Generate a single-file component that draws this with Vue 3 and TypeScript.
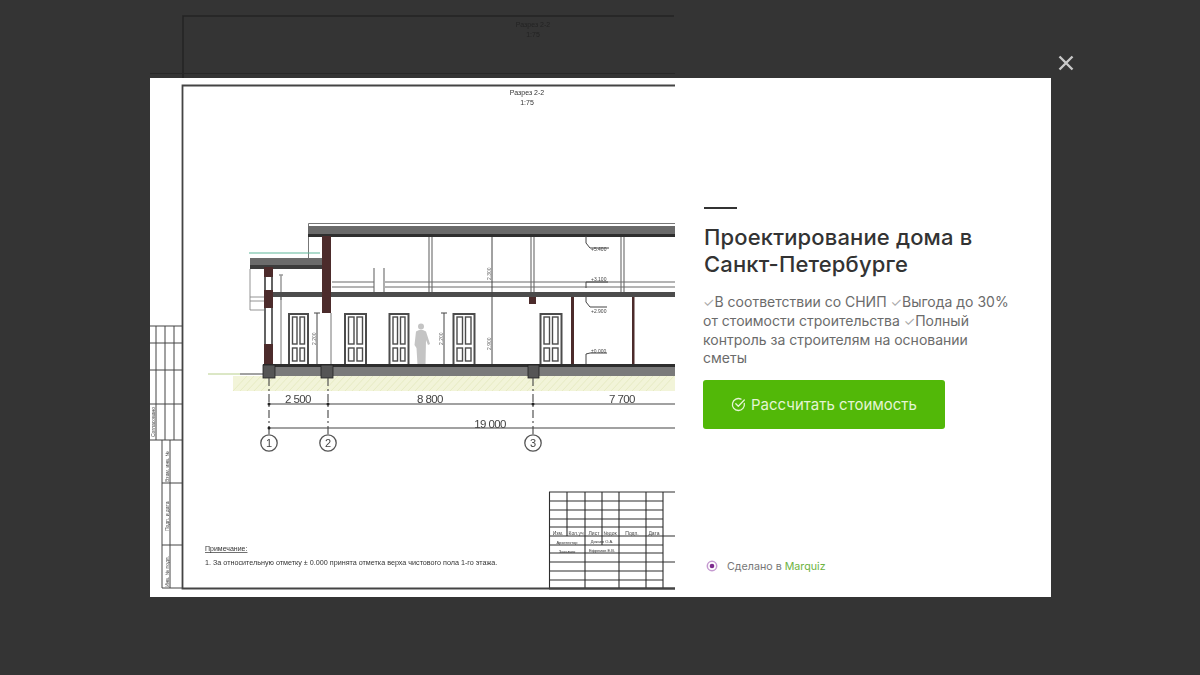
<template>
  <div class="page">
    <!-- тот же чертёж за модалкой, виден только сверху -->
    <svg class="backdrop" width="1200" height="78" viewBox="0 0 1200 78">
      <path d="M183 78V16H674" fill="none" stroke="#232323" stroke-width="1.5" />
      <path d="M150 73.5H675" stroke="#282828" stroke-width="1" />
      <text x="533" y="27" text-anchor="middle" class="bd-text">Разрез 2-2</text>
      <text x="533" y="37" text-anchor="middle" class="bd-text">1:75</text>
    </svg>

    <button class="close" aria-label="Закрыть">
      <svg width="16" height="16" viewBox="0 0 16 16">
        <path d="M1.5 1.5L14.5 14.5M14.5 1.5L1.5 14.5" stroke="#c8c8c8" stroke-width="2.4" />
      </svg>
    </button>

    <div class="modal">
      <div class="picture">
        <svg width="525" height="519" viewBox="150 78 525 519" class="drawing">
          <!-- рамка листа -->
          <path d="M675 85.5H182.5V588.5H675" fill="none" stroke="#444" stroke-width="1.8" />
          <text x="527" y="95" text-anchor="middle" class="t7">Разрез 2-2</text>
          <text x="527" y="105" text-anchor="middle" class="t7">1:75</text>

          <!-- штамп слева -->
          <g fill="none" stroke="#444" stroke-width="1">
            <path d="M150 326H182M150 343H182M150 370H182M150 404H182M150 440H182" />
            <path d="M156 326V440M165 326V440M174 326V440" />
            <path d="M162 440V588M170 440V588M162 483H182M162 545H182M162 588H182" />
          </g>
          <text transform="translate(155 437) rotate(-90)" class="t5">Согласовано</text>
          <text transform="translate(169 482) rotate(-90)" class="t5">Взам. инв. №</text>
          <text transform="translate(169 531) rotate(-90)" class="t5">Подп. и дата</text>
          <text transform="translate(169 587) rotate(-90)" class="t5">Инв. № подл.</text>

          <!-- грунт -->
          <rect x="233" y="376" width="442" height="15" fill="#f2f4d9" />
          <path v-for="x in hatchX" :key="x" :d="`M${x} 391L${x + 14} 376`" stroke="#dfe4b4" stroke-width="0.6" />
          <path d="M208 374H240" stroke="#b8cf8c" stroke-width="1" />
          <path d="M240 374H263" stroke="#444" stroke-width="1" />

          <!-- кровля -->
          <path d="M308.500 258V223.500H675" fill="none" stroke="#777" stroke-width="1" />
          <rect x="308" y="226" width="367" height="11" fill="#6a6a6a" />
          <rect x="308" y="234" width="367" height="3" fill="#2e2e2e" />

          <!-- колонны второго света -->
          <g stroke="#6a6a6a" stroke-width="1.100">
            <path d="M429 237V292M432 237V292M531 237V292M534 237V292M621 237V292M624 237V292" />
            <path d="M332 282H374M332 287H374M385 282H675M385 287H675M374 268V292M384 268V292" />
          </g>

          <!-- козырёк -->
          <path d="M249 253H320" stroke="#5fb79a" stroke-width="1.200" />
          <rect x="250" y="258" width="72" height="11" fill="#6b6b6b" />
          <rect x="250" y="265" width="72" height="4" fill="#3c3c3c" />
          <path d="M250 269V310H264M250 297H264M250 301H264" stroke="#888" stroke-width="0.9" fill="none" />
          <path d="M279 275H283M281 275V300" stroke="#999" stroke-width="1.500" fill="none" />

          <!-- перекрытие -->
          <rect x="273" y="292" width="49" height="5" fill="#4c4c4c" />
          <rect x="329" y="292" width="346" height="5" fill="#4c4c4c" />

          <!-- кирпичные столбы -->
          <g fill="#4c2b2b">
            <rect x="322" y="236" width="9" height="77" />
            <rect x="264" y="267" width="9" height="10" />
            <rect x="264" y="290" width="9" height="18" />
            <rect x="264" y="344" width="9" height="21" />
            <rect x="529" y="297" width="7" height="7" />
            <rect x="571" y="297" width="3" height="68" />
            <rect x="632" y="297" width="2.500" height="68" />
          </g>
          <path d="M265 277V290M272 277V290M265 308V344M272 308V344" stroke="#222" stroke-width="1.400" />
          <path d="M281 297V365M331 313V365" stroke="#666" stroke-width="0.9" />

          <!-- двери -->
          <g v-for="d in doors" :key="d.x" fill="#fff" stroke="#4c4c4c">
            <rect :x="d.x" y="314" :width="d.w" height="51" stroke-width="2" />
            <rect :x="d.x + 3.500" y="317" :width="d.w / 2 - 5" height="27" stroke-width="1.400" />
            <rect :x="d.x + d.w / 2 + 1.500" y="317" :width="d.w / 2 - 5" height="27" stroke-width="1.400" />
            <rect :x="d.x + 3.500" y="348" :width="d.w / 2 - 5" height="13" stroke-width="1.400" />
            <rect :x="d.x + d.w / 2 + 1.500" y="348" :width="d.w / 2 - 5" height="13" stroke-width="1.400" />
          </g>

          <!-- человек -->
          <g fill="#c4c4c4">
            <circle cx="421" cy="326.500" r="3" />
            <path d="M416 331.500Q421 328 426 331.500L430 344L428 345L426 340L425.500 365H417.500L416.500 348L414.500 345Z" />
          </g>

          <!-- размерные линии -->
          <g stroke="#444" stroke-width="1" fill="none">
            <path d="M317 313V365M444 313V365M492 237V376" />
            <path d="M314 313H320M441 313H447" />
            <path d="M586 236V243L590 248H609M586 297V302L590 307H607M586 365V354L590 353H607M586 288V282H608" />
          </g>
          <text transform="translate(317 345) rotate(-90)" dy="-1" class="t5 dim">2.200</text>
          <text transform="translate(444 345) rotate(-90)" dy="-1" class="t5 dim">2.200</text>
          <text transform="translate(492 350) rotate(-90)" dy="-1" class="t5 dim">2.900</text>
          <text transform="translate(492 280) rotate(-90)" dy="-1" class="t5 dim">2.300</text>
          <text x="591" y="251" class="t5">+5.400</text>
          <text x="591" y="281" class="t5">+3.100</text>
          <text x="591" y="313" class="t5">+2.900</text>
          <text x="591" y="353" class="t5">±0.000</text>

          <!-- плита и фундаменты -->
          <rect x="263" y="364" width="412" height="12" fill="#7a7a7a" />
          <rect x="263" y="364" width="412" height="3" fill="#2e2e2e" />
          <g fill="#555" stroke="#222" stroke-width="0.8">
            <rect x="263" y="365" width="12" height="13" />
            <rect x="321" y="365" width="12" height="13" />
            <rect x="528" y="365" width="11" height="13" />
          </g>

          <!-- оси -->
          <g stroke="#444" stroke-width="1.100" fill="none">
            <path d="M269 378V434M328 378V434M533 378V434" stroke-dasharray="8 3 2 3" />
            <path d="M269 404H675M269 428H675" />
          </g>
          <g v-for="a in axes" :key="a.n">
            <circle :cx="a.x" cy="443" r="8.200" fill="#fff" stroke="#555" stroke-width="1.300" />
            <text :x="a.x" y="447" text-anchor="middle" class="axis">{{ a.n }}</text>
            <circle :cx="a.x" cy="404" r="1.500" fill="#222" />
          </g>
          <circle cx="269" cy="428" r="1.500" fill="#222" />
          <text x="298" y="403" text-anchor="middle" class="size">2 500</text>
          <text x="430" y="403" text-anchor="middle" class="size">8 800</text>
          <text x="622" y="403" text-anchor="middle" class="size">7 700</text>
          <text x="490" y="428" text-anchor="middle" class="size">19 000</text>

          <!-- примечания -->
          <text x="205" y="551" class="t7" text-decoration="underline">Примечание:</text>
          <text x="205" y="565" class="t7 note">1. За относительную отметку ± 0.000 принята отметка верха чистового пола 1-го этажа.</text>

          <!-- основная надпись -->
          <g stroke="#2e2e2e" stroke-width="1.100" fill="none">
            <path d="M549 492H675M549 501H663M549 510H663M549 519H663M549 527H663M549 536H675M549 545H663M549 553H663M549 562H675M549 571H663M549 580H663" />
            <path d="M549.500 492V589M585 492V589M619 492V589M646 492V589M663 492V589M567 492V536M602 492V545" />
          </g>
          <path d="M549 588.500H675" stroke="#444" stroke-width="1.800" />
          <text x="558" y="535" text-anchor="middle" class="t5">Изм.</text>
          <text x="576" y="535" text-anchor="middle" class="t5">Кол.уч</text>
          <text x="594" y="535" text-anchor="middle" class="t5">Лист</text>
          <text x="610" y="535" text-anchor="middle" class="t5">№док</text>
          <text x="632" y="535" text-anchor="middle" class="t5">Подп.</text>
          <text x="654" y="535" text-anchor="middle" class="t5">Дата</text>
          <text x="567" y="544" text-anchor="middle" class="t4">Архитектор</text>
          <text x="602" y="543" text-anchor="middle" class="t4">Дикаев О.А.</text>
          <text x="567" y="553" text-anchor="middle" class="t4">Заказчик</text>
          <text x="602" y="552" text-anchor="middle" class="t4">Ефремов Е.В.</text>
        </svg>
      </div>

      <div class="info">
        <div class="info-body">
          <div class="dash"></div>
          <h1>Проектирование дома в Санкт-Петербурге</h1>
          <p class="desc">
            <span v-for="item in points" :key="item" class="point">{{ item + ' ' }}</span>
          </p>
          <button class="cta">
            <svg width="15" height="15" viewBox="0 0 15 15" fill="none">
              <path d="M13.300 6.400A6 6 0 1 1 10 2.100" stroke="#e4f5d4" stroke-width="1.300" stroke-linecap="round" />
              <path d="M4.800 6.800L7.300 9.300L13.300 3" stroke="#e4f5d4" stroke-width="1.300" stroke-linecap="round" stroke-linejoin="round" />
            </svg>
            Рассчитать стоимость
          </button>
        </div>
        <div class="made">
          <svg width="14" height="14" viewBox="0 0 14 14" fill="none">
            <circle cx="7" cy="7" r="4.700" stroke="#c59ad0" stroke-width="1.500" />
            <circle cx="7" cy="7" r="2.300" fill="#7d2c8e" />
          </svg>
          <span>Сделано в <b>Marquiz</b></span>
        </div>
      </div>
    </div>
  </div>
</template>

<script setup lang="ts">
const points = [
  'В соответствии со СНИП',
  'Выгода до 30% от стоимости строительства',
  'Полный контроль за строителям на основании сметы',
]

const doors = [
  { x: 289, w: 19 },
  { x: 345, w: 21 },
  { x: 389.5, w: 19 },
  { x: 453.5, w: 21 },
  { x: 540.5, w: 21 },
]

const axes = [
  { n: 1, x: 269 },
  { n: 2, x: 328 },
  { n: 3, x: 533 },
]

const hatchX: number[] = []
for (let x = 233; x < 662; x += 7) hatchX.push(x)
</script>

<style>
html, body { margin: 0; background: #343434; }
</style>

<style scoped>
.page {
  position: relative;
  width: 1200px;
  height: 675px;
  overflow: hidden;
  background: #343434;
  font-family: Inter, "Noto Sans", sans-serif;
  padding-top: 78px;
  box-sizing: border-box;
}
.backdrop { position: absolute; left: 0; top: 0; filter: blur(0.7px); }
.bd-text { font: 7px "Liberation Sans", sans-serif; fill: #232323; }

.close {
  position: absolute;
  left: 1058px;
  top: 55px;
  width: 16px;
  height: 16px;
  padding: 0;
  border: none;
  background: none;
  line-height: 0;
}

.modal {
  display: flex;
  width: 901px;
  height: 519px;
  margin-left: 150px;
  background: #fff;
}
.picture { width: 525px; flex-shrink: 0; line-height: 0; overflow: hidden; }
.drawing { display: block; filter: blur(0.5px); }
.t7 { font: 7px "Liberation Sans", sans-serif; fill: #333; }
.note { font-size: 7.200px; }
.t5 { font: 5px "Liberation Sans", sans-serif; fill: #444; }
.t4 { font: 4px "Liberation Sans", sans-serif; fill: #333; }
.dim { fill: #666; }
.axis { font: 11px "Liberation Sans", sans-serif; fill: #444; }
.size { font: 11.500px "Liberation Sans", sans-serif; fill: #444; letter-spacing: -0.6px; }

.info {
  flex: 1;
  display: flex;
  flex-direction: column;
  padding: 0 41px 23px 28px;
  min-width: 0;
}
.info-body {
  flex: 1;
  display: flex;
  flex-direction: column;
  justify-content: center;
  align-items: flex-start;
}
.dash { width: 33px; height: 2px; margin-left: 1px; background: #333; margin-bottom: 15px; }
h1 {
  margin: 0 0 15px 1px;
  font-size: 22px;
  line-height: 27px;
  font-weight: 500;
  color: #333;
  letter-spacing: 0.15px;
}
.desc {
  margin: 0 0 12px;
  font-size: 14px;
  line-height: 18.800px;
  color: #6b6b6b;
}
.point::before { content: "✓"; color: #a9a9a9; font-size: 13px; }
.cta {
  display: flex;
  align-items: center;
  justify-content: center;
  gap: 5px;
  width: 242px;
  height: 49px;
  padding: 0;
  border: none;
  border-radius: 3px;
  background: #52b808;
  color: #e4f5d4;
  font-family: inherit;
  font-size: 15px;
}
.made {
  display: flex;
  align-items: center;
  gap: 8px;
  padding-left: 2px;
  height: 16px;
  font-size: 10.700px;
  color: #777;
}
.made b { font-weight: 400; color: #6db33f; }
</style>
